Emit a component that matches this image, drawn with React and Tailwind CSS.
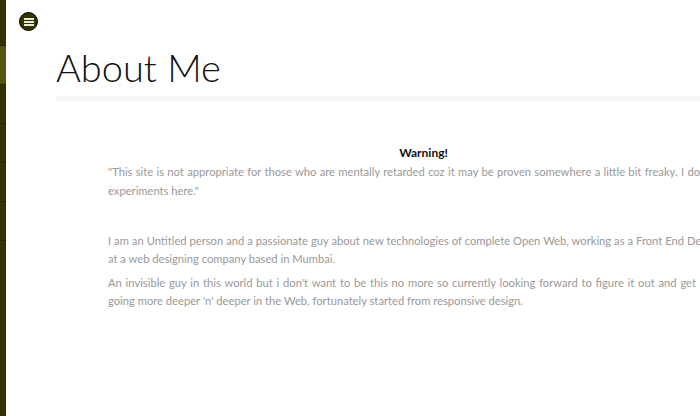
export default function App() {
  const segs = [46, 39, 39, 39, 39, 39];
  return (
    <div className="relative w-[700px] h-[416px] overflow-hidden bg-white flex" style={{ fontFamily: "Lato, 'Open Sans', sans-serif" }}>
      <div className="w-[6px] h-full bg-[#333300] flex flex-col shrink-0">
        {segs.map((h, i) => (
          <div
            key={i}
            className={i === 1 ? "h-[39px] bg-[#555511] border-b border-[#222200]" : i === 0 ? "h-[46px] border-b border-[#222200]" : "h-[39px] border-b border-[#222200]"}
          />
        ))}
      </div>
      <div className="flex-1 relative">
        <button className="absolute left-[13px] top-[12px] w-[19px] h-[19px] rounded-full bg-[#333300] border-[1.5px] border-black flex flex-col items-center justify-center gap-[1px]">
          <span className="block w-[10px] h-[2px] bg-[#e8e8d8]" />
          <span className="block w-[10px] h-[2px] bg-[#e8e8d8]" />
          <span className="block w-[10px] h-[2px] bg-[#e8e8d8]" />
        </button>
        <div className="pl-[50px] pt-[45px]">
          <h1 className="text-[38px] leading-[45px] font-light text-[#111] whitespace-nowrap border-b-[5px] border-[#f7f7f7] pb-[6px] w-[700px]">About Me</h1>
        </div>
        <div className="pl-[102px] pt-[42px] text-[11.2px] font-normal text-[#999]">
          <p className="text-center font-bold text-[#111] text-[12px] leading-[19px] w-[631px]">Warning!</p>
          <p className="leading-[19px] text-justify w-[592px]">"This site is not appropriate for those who are mentally retarded coz it may be proven somewhere a little bit freaky. I do experiments here."</p>
          <p className="leading-[17.5px] mt-[32px] text-justify w-[630px]">I am an Untitled person and a passionate guy about new technologies of complete Open Web, working as a Front End Developer at a web designing company based in Mumbai.</p>
          <p className="leading-[18px] mt-[7px] text-justify w-[588px]">An invisible guy in this world but i don't want to be this no more so currently looking forward to figure it out and get going more deeper 'n' deeper in the Web, fortunately started from responsive design.</p>
        </div>
      </div>
    </div>
  );
}
